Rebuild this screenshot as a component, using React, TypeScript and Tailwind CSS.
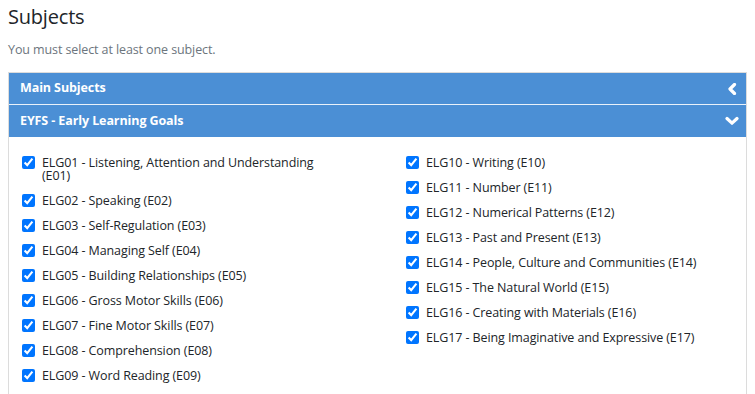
const leftGoals = [
  "ELG01 - Listening, Attention and Understanding (E01)",
  "ELG02 - Speaking (E02)",
  "ELG03 - Self-Regulation (E03)",
  "ELG04 - Managing Self (E04)",
  "ELG05 - Building Relationships (E05)",
  "ELG06 - Gross Motor Skills (E06)",
  "ELG07 - Fine Motor Skills (E07)",
  "ELG08 - Comprehension (E08)",
  "ELG09 - Word Reading (E09)",
];

const rightGoals = [
  "ELG10 - Writing (E10)",
  "ELG11 - Number (E11)",
  "ELG12 - Numerical Patterns (E12)",
  "ELG13 - Past and Present (E13)",
  "ELG14 - People, Culture and Communities (E14)",
  "ELG15 - The Natural World (E15)",
  "ELG16 - Creating with Materials (E16)",
  "ELG17 - Being Imaginative and Expressive (E17)",
];

function Goal({ label }: { label: string }) {
  return (
    <label className="flex items-start gap-[7px] text-[12.5px] leading-[13px] tracking-[-0.1px] text-[#212529]">
      <input type="checkbox" defaultChecked className="mt-0 h-[13px] w-[13px] shrink-0" />
      <span className="max-w-[290px]">{label}</span>
    </label>
  );
}

// chunky chevrons, like the font-awesome ones in the header bars
function ChevronLeft() {
  return (
    <svg width="10" height="12" viewBox="0 0 10 12" aria-hidden="true">
      <path d="M7.5 1.5 L3 6 L7.5 10.5" fill="none" stroke="white" strokeWidth="3.2" strokeLinecap="round" strokeLinejoin="round" />
    </svg>
  );
}

function ChevronDown() {
  return (
    <svg width="14" height="10" viewBox="0 0 14 10" aria-hidden="true">
      <path d="M2 2.5 L7 7.2 L12 2.5" fill="none" stroke="white" strokeWidth="3.2" strokeLinecap="round" strokeLinejoin="round" />
    </svg>
  );
}

export default function App() {
  return (
    <div className="min-h-screen bg-white px-2 pt-[4px] font-['Open_Sans',sans-serif]">
      <h2 className="text-[20px] leading-[26px] font-medium tracking-[-0.2px] text-[#212529]">Subjects</h2>
      <p className="mt-[12px] text-[12.5px] leading-[16px] tracking-[-0.1px] text-[#6c757d]">
        You must select at least one subject.
      </p>

      <div className="mt-[14px] border border-[#dcdcdc]">
        <div className="flex h-[31px] items-center justify-between bg-[#4b8fd5] pl-[11px] pr-[9px] text-[12.5px] font-bold tracking-[-0.1px] text-white">
          <span>Main Subjects</span>
          <ChevronLeft />
        </div>
        <div className="h-px bg-[#e9f1fa]" />
        <div className="flex h-[32px] items-center justify-between bg-[#4b8fd5] pl-[11px] pr-[7px] text-[12.5px] font-bold tracking-[-0.1px] text-white">
          <span>EYFS - Early Learning Goals</span>
          <ChevronDown />
        </div>

        <div className="grid grid-cols-[384px_1fr] pl-[13px] pt-[19px] pb-6">
          <div className="flex flex-col gap-[12px]">
            {leftGoals.map((g) => (
              <Goal key={g} label={g} />
            ))}
          </div>
          <div className="flex flex-col gap-[12px]">
            {rightGoals.map((g) => (
              <Goal key={g} label={g} />
            ))}
          </div>
        </div>
      </div>
    </div>
  );
}
